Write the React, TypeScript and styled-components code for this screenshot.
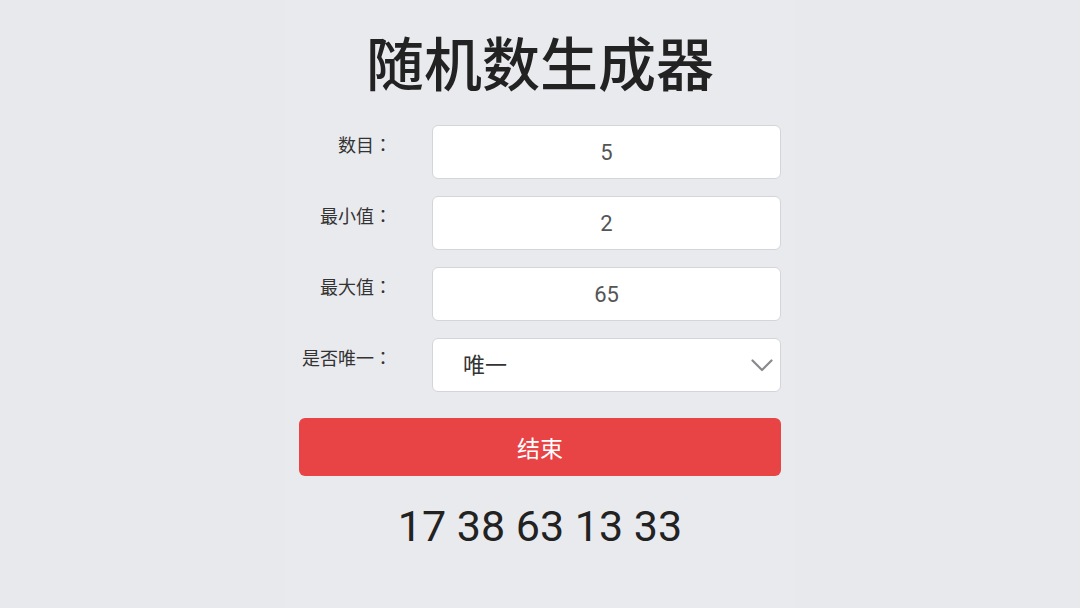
import styled, { createGlobalStyle } from "styled-components";
import { useState } from "react";

const GlobalStyle = createGlobalStyle`
  html, body {
    margin: 0;
    padding: 0;
    background: #e8e9ec;
    font-family: "Roboto", "Noto Sans CJK SC", sans-serif;
  }
`;

const fields = [
  { id: "count", label: "数目", value: "5" },
  { id: "min", label: "最小值", value: "2" },
  { id: "max", label: "最大值", value: "65" },
];

const App = () => {
  const [unique, setUnique] = useState("唯一");
  const results = [17, 38, 63, 13, 33];

  return (
    <>
      <GlobalStyle />
      <Page>
        <Panel>
          <Title>随机数生成器</Title>
          <Form>
            {fields.map(field => (
              <Row key={field.id}>
                <Label>{field.label}<Colon>：</Colon></Label>
                <Input defaultValue={field.value} />
              </Row>
            ))}
            <Row>
              <Label>是否唯一<Colon>：</Colon></Label>
              <SelectBox>
                <Select value={unique} onChange={e => setUnique(e.target.value)}>
                  <option>唯一</option>
                  <option>可重复</option>
                </Select>
                <Chevron viewBox="0 0 22 14" aria-hidden>
                  <path d="M1.5 1.5 L11 11 L20.5 1.5" />
                </Chevron>
              </SelectBox>
            </Row>
          </Form>
          <StopButton>结束</StopButton>
          <Result>{results.join(" ")}</Result>
        </Panel>
      </Page>
    </>
  );
};

const Page = styled.div`
  min-height: 608px;
  display: flex;
  justify-content: center;
`;

const Panel = styled.div`
  width: 510px;
  min-height: 608px;
  background: #e9eaee;
  padding: 24px 14px 0 14px;
  box-sizing: border-box;
  display: flex;
  flex-direction: column;
`;

const Title = styled.h1`
  margin: 0;
  text-align: center;
  font-size: 58px;
  font-weight: 500;
  line-height: 84px;
  color: #222;
`;

const Form = styled.div`
  margin-top: 17px;
  display: flex;
  flex-direction: column;
  gap: 17px;
`;

const Row = styled.div`
  display: grid;
  grid-template-columns: 93px 1fr;
  column-gap: 40px;
  align-items: start;
`;

const Label = styled.label`
  text-align: right;
  font-size: 18px;
  line-height: 22px;
  padding-top: 8px;
  color: #333;
  white-space: nowrap;
`;

const Colon = styled.span`
  font-family: "Noto Sans CJK JP", sans-serif;
`;

const Input = styled.input`
  height: 54px;
  box-sizing: border-box;
  border: 1px solid #d4d5da;
  border-radius: 6px;
  background: #fff;
  text-align: center;
  font-family: "Roboto", "Noto Sans CJK SC", sans-serif;
  font-size: 22px;
  color: #555;
  outline: none;
`;

const SelectBox = styled.div`
  position: relative;
`;

const Select = styled.select`
  width: 100%;
  height: 54px;
  box-sizing: border-box;
  border: 1px solid #d4d5da;
  border-radius: 6px;
  background: #fff;
  padding: 0 0 0 30px;
  font-family: "Roboto", "Noto Sans CJK SC", sans-serif;
  font-size: 22px;
  color: #333;
  appearance: none;
  outline: none;
`;

const Chevron = styled.svg`
  position: absolute;
  right: 8px;
  top: 21px;
  width: 22px;
  height: 14px;
  fill: none;
  stroke: #8a8a8e;
  stroke-width: 2.2;
  stroke-linecap: round;
  stroke-linejoin: round;
  pointer-events: none;
`;

const StopButton = styled.button`
  margin-top: 26px;
  height: 58px;
  border: none;
  border-radius: 6px;
  background: #e84446;
  color: #fff;
  font-family: "Roboto", "Noto Sans CJK SC", sans-serif;
  font-size: 23px;
  cursor: pointer;
`;

const Result = styled.div`
  margin-top: 22px;
  text-align: center;
  font-size: 43px;
  line-height: 56px;
  color: #222;
`;

export default App;
